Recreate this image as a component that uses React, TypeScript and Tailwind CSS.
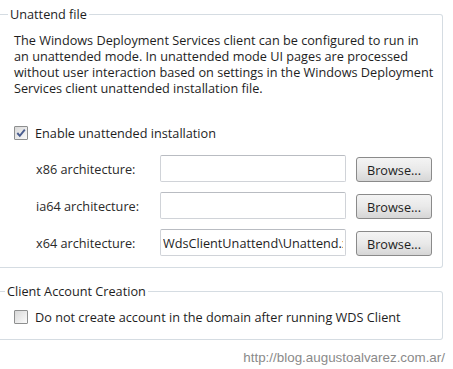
import { useState } from 'react';

const rows = [
  { label: 'x86 architecture:', value: '' },
  { label: 'ia64 architecture:', value: '' },
  { label: 'x64 architecture:', value: 'WdsClientUnattend\\Unattend.xml' },
];

const intro = [
  'The Windows Deployment Services client can be configured to run in',
  'an unattended mode. In unattended mode UI pages are processed',
  'without user interaction based on settings in the Windows Deployment',
  'Services client unattended installation file.',
];

function WinCheck({ checked, onToggle }: { checked: boolean; onToggle: () => void }) {
  return (
    <button
      type="button"
      onClick={onToggle}
      className="flex h-[14px] w-[14px] shrink-0 items-center justify-center rounded-[1px] border border-[#8e8f8f] bg-gradient-to-br from-[#d8d8d8] to-[#fbfbfb] p-0"
    >
      {checked && (
        <svg width="12" height="12" viewBox="0 0 12 12">
          <path d="M2.3 6 L4.8 8.8 L9.8 2.6" fill="none" stroke="#4a5d8f" strokeWidth="1.9" />
        </svg>
      )}
    </button>
  );
}

export default function App() {
  const [enabled, setEnabled] = useState(true);
  const [noAccount, setNoAccount] = useState(false);

  return (
    <div className="h-[369px] w-[453px] overflow-hidden bg-white pt-[6px] text-[12.7px] text-[#1e1e1e] [font-family:'Open_Sans','Noto_Sans',sans-serif]">
      {/* Unattend file */}
      <fieldset className="mr-[10px] rounded-r-[3px] border border-l-0 border-[#d5dce2] p-0">
        <legend className="ml-[8px] px-[2px] leading-[16px]">Unattend file</legend>
        <div className="pb-[11px] pl-[14px]">
          <div className="mt-[10px] flex flex-col">
            {intro.map((line) => (
              <span key={line} className="h-[16px] whitespace-nowrap leading-[16px]">
                {line}
              </span>
            ))}
          </div>

          <label className="mt-[29px] flex items-center gap-[7px]">
            <WinCheck checked={enabled} onToggle={() => setEnabled(!enabled)} />
            <span className="leading-[16px]">Enable unattended installation</span>
          </label>

          <div className="mt-[14px] flex flex-col gap-[10px] pl-[22px]">
            {rows.map((r) => (
              <div key={r.label} className="flex h-[27px] items-end">
                <span className="w-[124px] self-center leading-[16px] text-[#2a2a2a]">{r.label}</span>
                <input
                  readOnly
                  value={r.value}
                  className="h-[27px] w-[186px] rounded-[2px] border border-[#d0d3d8] border-t-[#b9bcc2] px-[2px] text-[12.7px] text-[#1e1e1e] outline-none"
                />
                <button
                  type="button"
                  className="ml-[10px] h-[25px] w-[76px] rounded-[3px] border border-[#8a8a8a] bg-gradient-to-b from-[#f4f4f4] via-[#e9e9e9] to-[#d6d6d6] text-[12.7px] leading-[16px] text-[#1e1e1e]"
                >
                  Browse...
                </button>
              </div>
            ))}
          </div>
        </div>
      </fieldset>

      {/* Client Account Creation */}
      <fieldset className="mr-[10px] mt-[15px] rounded-r-[3px] border border-l-0 border-[#d5dce2] p-0">
        <legend className="ml-[5px] px-[2px] leading-[16px]">Client Account Creation</legend>
        <div className="pb-[14px] pl-[14px]">
          <label className="mt-[10px] flex items-center gap-[7px]">
            <WinCheck checked={noAccount} onToggle={() => setNoAccount(!noAccount)} />
            <span className="leading-[16px]">Do not create account in the domain after running WDS Client</span>
          </label>
        </div>
      </fieldset>

      <div className="mt-[10px] pr-[8px] text-right text-[13.4px] leading-[16px] text-[#8a8a8a] [font-family:'Liberation_Sans',Arial,sans-serif]">
        http://blog.augustoalvarez.com.ar/
      </div>
    </div>
  );
}
